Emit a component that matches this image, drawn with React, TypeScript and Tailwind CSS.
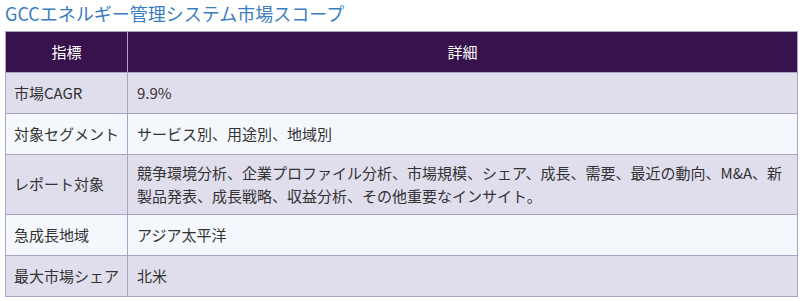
const rows: Array<[string, string]> = [
  ['市場CAGR', '9.9%'],
  ['対象セグメント', 'サービス別、用途別、地域別'],
  [
    'レポート対象',
    '競争環境分析、企業プロファイル分析、市場規模、シェア、成長、需要、最近の動向、M&A、新製品発表、成長戦略、収益分析、その他重要なインサイト。',
  ],
  ['急成長地域', 'アジア太平洋'],
  ['最大市場シェア', '北米'],
]

export default function App() {
  return (
    <div className="w-[802px] h-[301px] bg-white pl-[5px] pr-[4px] font-['Noto_Sans_CJK_JP','Noto_Sans',sans-serif] text-[#333]">
      <h2 className="text-[18px] leading-[26px] text-[#3a7dc0] font-normal">
        GCCエネルギー管理システム市場スコープ
      </h2>
      <table className="mt-[5px] w-[793px] border-collapse border border-[#aaa3c5] text-[15px] leading-[22.5px]">
        <thead>
          <tr className="bg-[#38124c] text-white">
            <th className="w-[122px] h-[41px] border border-[#aaa3c5] font-normal text-center">指標</th>
            <th className="border border-[#aaa3c5] font-normal text-center">詳細</th>
          </tr>
        </thead>
        <tbody>
          {rows.map(([k, v], i) => (
            <tr key={k} className={i % 2 === 0 ? 'bg-[#e0dded]' : 'bg-[#f4f8fc]'}>
              <td className="h-[41px] border border-[#aaa3c5] px-[8px] py-[7px] align-middle whitespace-nowrap">{k}</td>
              <td className="border border-[#aaa3c5] px-[9px] py-[7px] align-middle">{v}</td>
            </tr>
          ))}
        </tbody>
      </table>
    </div>
  )
}
